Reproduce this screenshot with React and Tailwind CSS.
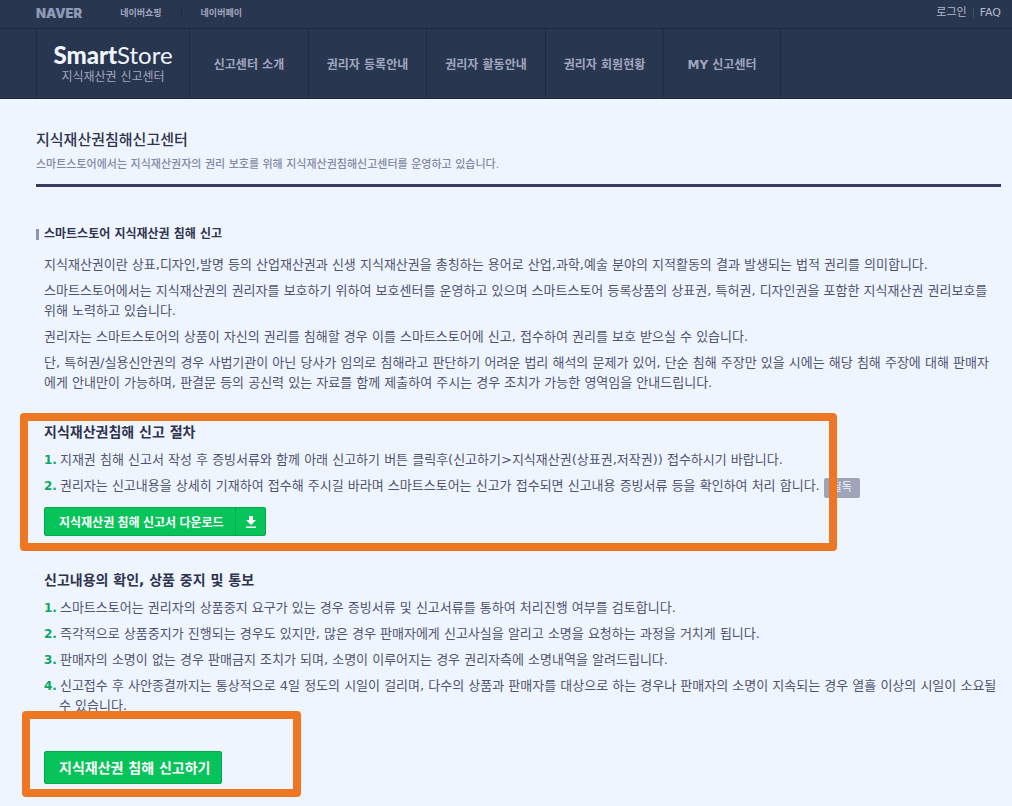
import React from 'react';

const menus = [
    { label: '신고센터 소개', width: 'w-[119px]' },
    { label: '권리자 등록안내', width: 'w-[118px]' },
    { label: '권리자 활동안내', width: 'w-[119px]' },
    { label: '권리자 회원현황', width: 'w-[118px]' },
    { label: 'MY 신고센터', width: 'w-[117px]' },
];

const introTexts = [
    '지식재산권이란 상표,디자인,발명 등의 산업재산권과 신생 지식재산권을 총칭하는 용어로 산업,과학,예술 분야의 지적활동의 결과 발생되는 법적 권리를 의미합니다.',
    '스마트스토어에서는 지식재산권의 권리자를 보호하기 위하여 보호센터를 운영하고 있으며 스마트스토어 등록상품의 상표권, 특허권, 디자인권을 포함한 지식재산권 권리보호를 위해 노력하고 있습니다.',
    '권리자는 스마트스토어의 상품이 자신의 권리를 침해할 경우 이를 스마트스토어에 신고, 접수하여 권리를 보호 받으실 수 있습니다.',
    '단, 특허권/실용신안권의 경우 사법기관이 아닌 당사가 임의로 침해라고 판단하기 어려운 법리 해석의 문제가 있어, 단순 침해 주장만 있을 시에는 해당 침해 주장에 대해 판매자에게 안내만이 가능하며, 판결문 등의 공신력 있는 자료를 함께 제출하여 주시는 경우 조치가 가능한 영역임을 안내드립니다.',
];

const procedureSteps = [
    { text: '지재권 침해 신고서 작성 후 증빙서류와 함께 아래 신고하기 버튼 클릭후(신고하기>지식재산권(상표권,저작권)) 접수하시기 바랍니다.' },
    {
        text: '권리자는 신고내용을 상세히 기재하여 접수해 주시길 바라며 스마트스토어는 신고가 접수되면 신고내용 증빙서류 등을 확인하여 처리 합니다.',
        badge: '필독',
    },
];

const reviewSteps = [
    { text: '스마트스토어는 권리자의 상품중지 요구가 있는 경우 증빙서류 및 신고서류를 통하여 처리진행 여부를 검토합니다.' },
    { text: '즉각적으로 상품중지가 진행되는 경우도 있지만, 많은 경우 판매자에게 신고사실을 알리고 소명을 요청하는 과정을 거치게 됩니다.' },
    { text: '판매자의 소명이 없는 경우 판매금지 조치가 되며, 소명이 이루어지는 경우 권리자측에 소명내역을 알려드립니다.' },
    { text: '신고접수 후 사안종결까지는 통상적으로 4일 정도의 시일이 걸리며, 다수의 상품과 판매자를 대상으로 하는 경우나 판매자의 소명이 지속되는 경우 열흘 이상의 시일이 소요될 수 있습니다.' },
];

function Header() {
    return (
        <header className="bg-[#293650] text-[#a0a6bf]">
            <div className="flex h-[29px] items-center border-b border-[#1b2540] pl-9 pr-[11px] pb-[3px]">
                <a href="#" className="font-['Inter',sans-serif] text-[13px] leading-4 font-black text-[#8f9ab8]">NAVER</a>
                <a href="#" className="ml-[38px] text-[9px] leading-4 font-bold">네이버쇼핑</a>
                <span className="mx-[19px] h-[10px] w-px bg-[#1f2a45]" />
                <a href="#" className="text-[9px] leading-4 font-bold">네이버페이</a>
                <div className="ml-auto flex items-center text-[11px] leading-4 text-[#b4b9cb]">
                    <a href="#">로그인</a>
                    <span className="mx-1.5 h-[10px] w-px bg-[#404c68]" />
                    <a href="#">FAQ</a>
                </div>
            </div>

            <div className="flex h-[70px] border-b border-[#1b2540] pl-9">
                <a href="#" className="flex w-[153px] flex-col items-center border-l border-[#1f2a45] pt-[14px]">
                    <span className="font-['Lato',sans-serif] text-[24px] leading-6 text-[#eef5ff]">
                        <b className="font-black">Smart</b>
                        <span>Store</span>
                    </span>
                    <span className="text-[12px] leading-5">지식재산권 신고센터</span>
                </a>
                <nav className="flex border-r border-[#1f2a45]">
                    {menus.map((menu) => (
                        <a
                            key={menu.label}
                            href="#"
                            className={`flex items-center justify-center border-l border-[#1f2a45] pt-0.5 text-[12px] leading-5 font-bold ${menu.width}`}
                        >
                            {menu.label}
                        </a>
                    ))}
                </nav>
            </div>
        </header>
    );
}

function StepList({ steps }) {
    return (
        <ol className="mt-2 flex flex-col gap-1.5">
            {steps.map((step, i) => (
                <li key={step.text} className="pl-[15px] -indent-[15px]">
                    <b className="mr-[3px] text-[12px] text-[#0aa85f]">{i + 1}.</b>
                    {step.text}
                    {step.badge && (
                        <em className="mt-0.5 -mb-0.5 ml-1 inline-block h-5 w-9 rounded-xs bg-[#9fa4b9] text-center indent-0 align-top text-[11px] leading-5 not-italic text-[#eef5ff]">
                            {step.badge}
                        </em>
                    )}
                </li>
            ))}
        </ol>
    );
}

// Thick orange frame laid over the part to be emphasized
function Highlight({ className }) {
    return <div className={`pointer-events-none absolute rounded-sm border-8 border-[#ed7723] ${className}`} />;
}

export default function App() {
    return (
        <div lang="ko" className="min-h-screen bg-[#eef5ff] font-['DejaVu_Sans','Noto_Sans_CJK_KR',sans-serif] text-[#50536f]">
            <Header />

            <main className="pt-[29px] pr-[11px] pb-[22px] pl-9">
                <h1 className="text-[15px] leading-6 font-medium text-[#2f3350]">지식재산권침해신고센터</h1>
                <p className="pt-[3px] text-[11px] leading-5 font-medium text-[#8389a3]">
                    스마트스토어에서는 지식재산권자의 권리 보호를 위해 지식재산권침해신고센터를 운영하고 있습니다.
                </p>
                <hr className="mt-[9px] border-t-[3px] border-[#3a3a5e]" />

                <section className="pt-[37px] text-[13px] leading-5">
                    <h2 className="flex items-center text-[12px] leading-5 font-bold text-[#2f3350]">
                        <span className="mr-[5px] h-[11px] w-[3px] bg-[#8f96b0]" />
                        스마트스토어 지식재산권 침해 신고
                    </h2>
                    <div className="mt-[11px] flex flex-col gap-1.5 pr-1 pl-2">
                        {introTexts.map((text) => (
                            <p key={text}>{text}</p>
                        ))}
                    </div>
                </section>

                <section className="relative mt-[29px] pl-2 text-[13px] leading-5">
                    <h3 className="text-[14px] leading-5 font-bold text-[#2f3350]">지식재산권침해 신고 절차</h3>
                    <StepList steps={procedureSteps} />
                    <button
                        type="button"
                        className="mt-[11px] flex h-[29px] cursor-pointer items-stretch rounded-xs border border-[#05a94c] bg-[#07c45a] font-['Noto_Sans_CJK_KR',sans-serif] text-[12px] font-bold text-white"
                    >
                        <span className="flex w-[190px] items-center pl-[14px]">지식재산권 침해 신고서 다운로드</span>
                        <span className="flex w-[30px] items-center justify-center border-l border-[#05a94c]">
                            <svg width="10" height="12" viewBox="0 0 10 12" fill="currentColor">
                                <path d="M3 0h4v4h3L5 9 0 4h3zM0 10.5h10V12H0z" />
                            </svg>
                        </span>
                    </button>
                    <Highlight className="-top-[9px] -left-4 h-[138px] w-[817px]" />
                </section>

                <section className="mt-[34px] pl-2 text-[13px] leading-5">
                    <h3 className="text-[14px] leading-5 font-bold text-[#2f3350]">신고내용의 확인, 상품 중지 및 통보</h3>
                    <StepList steps={reviewSteps} />
                    <div className="relative mt-[35px]">
                        <button
                            type="button"
                            className="h-[33px] w-[178px] cursor-pointer rounded-xs border border-[#05a94c] bg-[#07c45a] pl-[14px] text-left text-[14px] leading-5 font-bold text-white"
                        >
                            지식재산권 침해 신고하기
                        </button>
                        <Highlight className="-top-10 -left-[22px] h-[86px] w-[279px]" />
                    </div>
                </section>
            </main>
        </div>
    );
}
